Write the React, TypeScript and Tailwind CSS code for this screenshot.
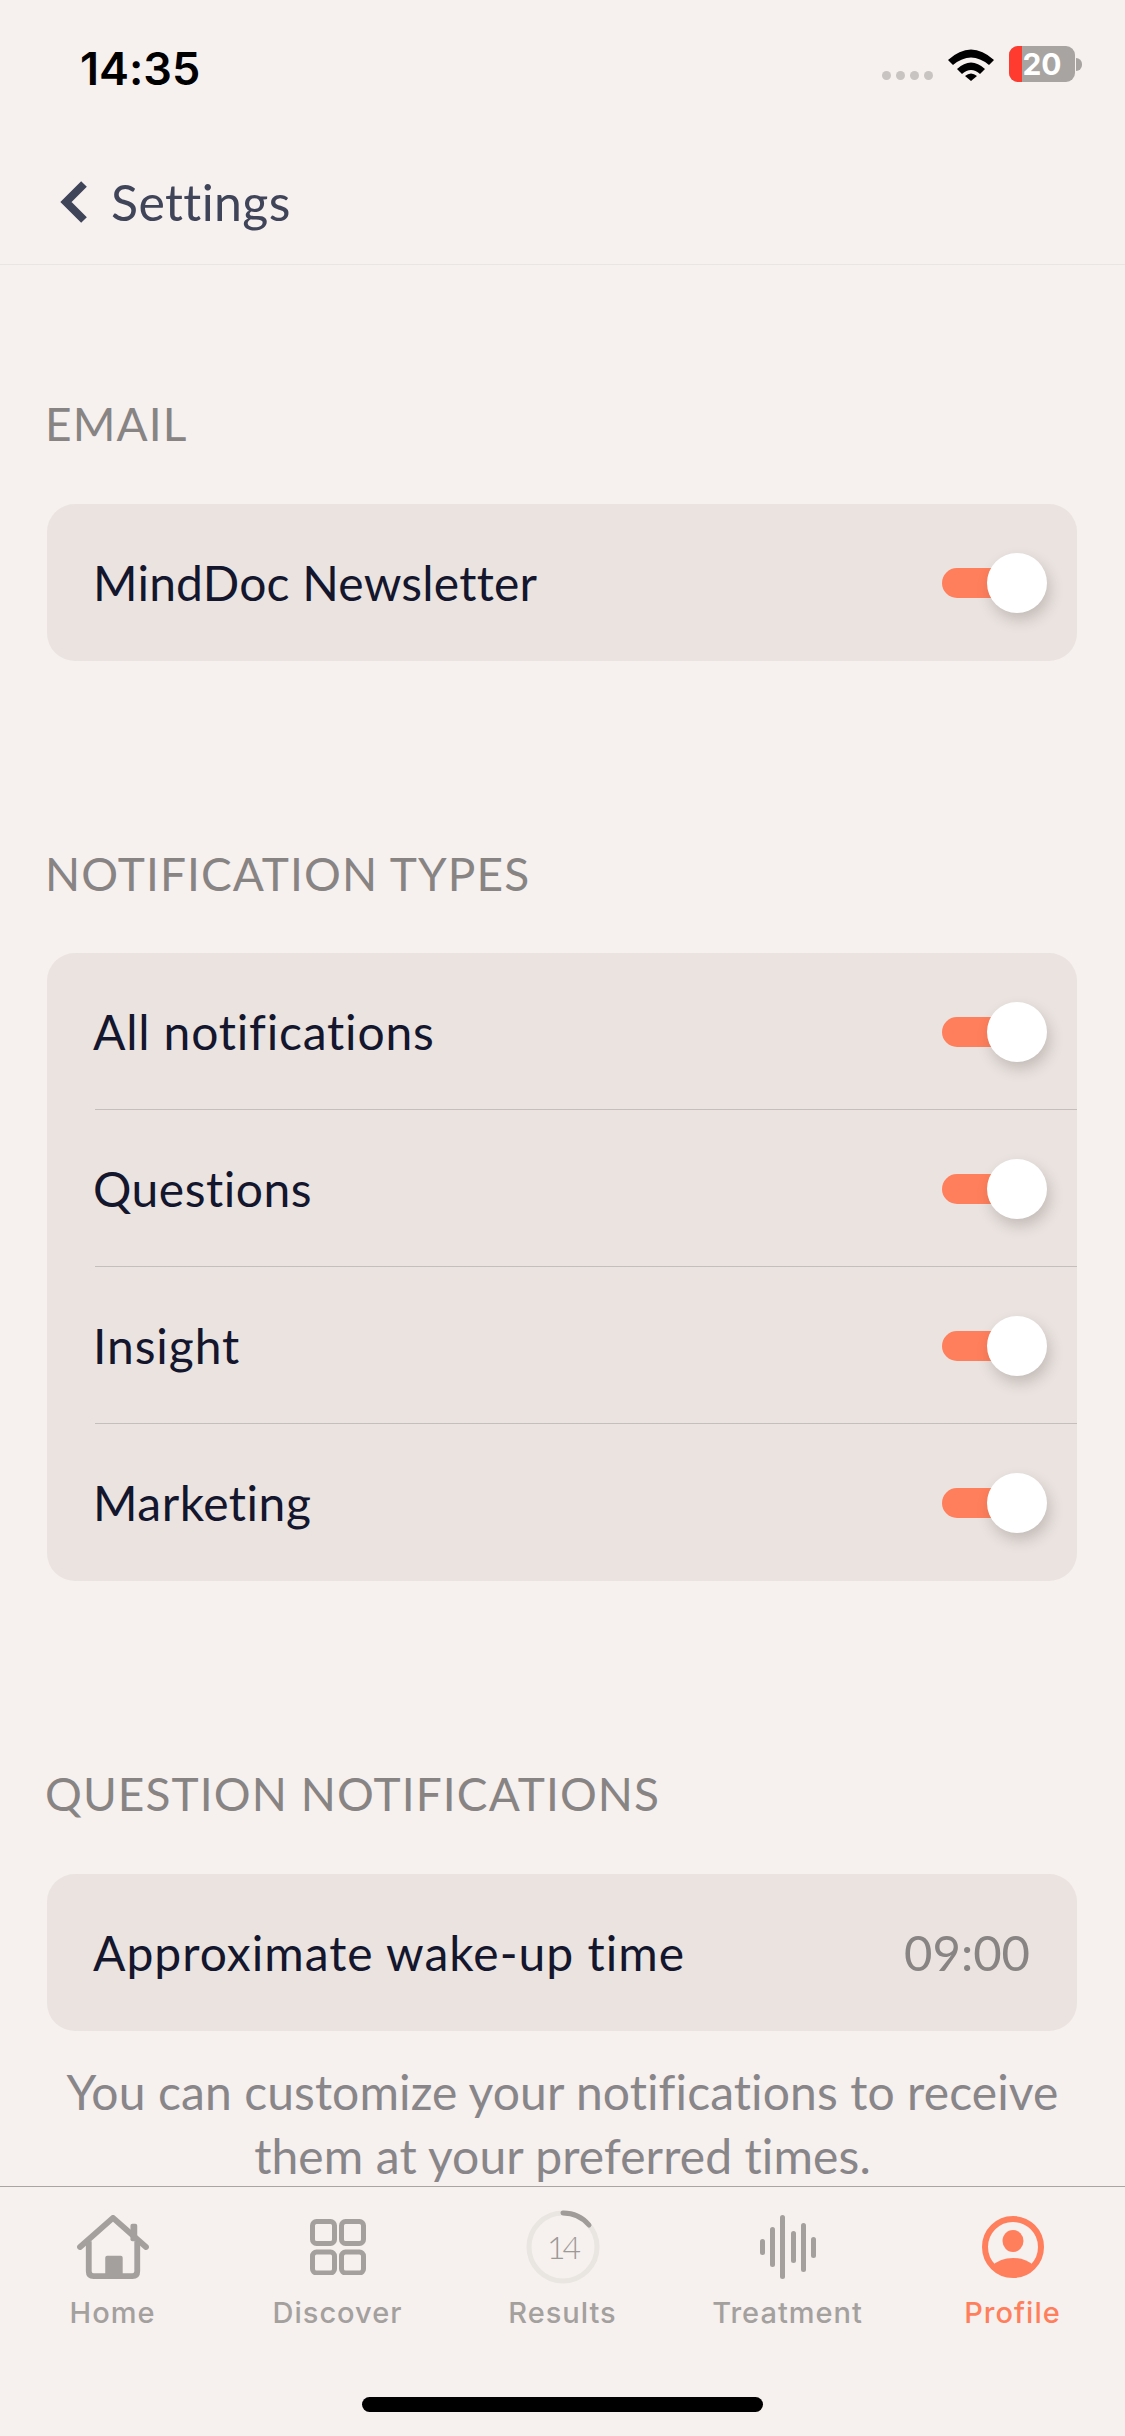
import React from 'react';

const BODY_FONT = { fontFamily: 'Lato, "Noto Sans", sans-serif', fontVariantLigatures: 'none' };

const Toggle = () => (
  <div className="flex items-center">
    <div className="h-[30px] w-[80px] rounded-full bg-[#ff7f5c]" />
    <div className="-ml-[35px] h-[60px] w-[60px] rounded-full bg-white shadow-[3px_7px_14px_rgba(60,50,45,0.22)]" />
  </div>
);

const Row = ({
  label,
  divider,
  labelClass = 'tracking-[0.5px]',
  children,
}: {
  label: string;
  divider?: boolean;
  labelClass?: string;
  children: React.ReactNode;
}) => (
  <div className="pl-[48px]">
    <div className={`flex h-[157px] items-center justify-between pr-[30px] ${divider ? 'shadow-[inset_0_-1px_0_#c4bebd]' : ''}`}>
      <span className={`-ml-[2px] text-[48px] leading-none text-[#14162e] ${labelClass}`}>{label}</span>
      {children}
    </div>
  </div>
);

const SectionLabel = ({ children, className }: { children: string; className: string }) => (
  <div className={`px-[45px] text-[46px] leading-[56px] tracking-[1.1px] text-[#878483] ${className}`}>{children}</div>
);

const HomeIcon = () => (
  <svg width="74" height="64" viewBox="0 0 74 66" fill="none">
    <path d="M3 33 L37 3 L71 33" stroke="#a3a09e" strokeWidth="6" strokeLinecap="round" strokeLinejoin="round" />
    <path d="M12 27 V58 Q12 63 17 63 H57 Q62 63 62 58 V27" stroke="#a3a09e" strokeWidth="6" />
    <rect x="55" y="9" width="7" height="18" rx="2" fill="#a3a09e" />
    <path d="M29 44 Q29 42 31 42 H45 Q47 42 47 44 V62 H29 Z" fill="#a3a09e" />
  </svg>
);

const DiscoverIcon = () => (
  <svg width="56" height="56" viewBox="0 0 56 56" fill="none" stroke="#a3a09e" strokeWidth="5">
    <rect x="2.5" y="2.5" width="22" height="22" rx="4" />
    <rect x="31.5" y="2.5" width="22" height="22" rx="4" />
    <rect x="2.5" y="33" width="22" height="21" rx="4" />
    <rect x="31.5" y="33" width="22" height="21" rx="4" />
  </svg>
);

const ResultsIcon = () => (
  <div className="relative h-[74px] w-[74px]">
    <svg width="74" height="74" viewBox="0 0 74 74" fill="none">
      <circle cx="37" cy="37" r="34" stroke="#e9e5e1" strokeWidth="5" />
      <path d="M37 3 A34 34 0 0 1 63 15" stroke="#a09c9a" strokeWidth="5" strokeLinecap="round" />
    </svg>
    <span
      className="absolute inset-0 flex items-center justify-center text-[32px] font-light tracking-[-3px] text-[#9c9997]"
      style={BODY_FONT}
    >
      14
    </span>
  </div>
);

const TreatmentIcon = () => (
  <svg width="56" height="64" viewBox="0 0 56 64" fill="#a3a09e">
    <rect x="0" y="24" width="5" height="16" rx="2.5" />
    <rect x="10" y="12" width="5" height="40" rx="2.5" />
    <rect x="20" y="0" width="5" height="64" rx="2.5" />
    <rect x="31" y="16" width="5" height="32" rx="2.5" />
    <rect x="41" y="8" width="5" height="49" rx="2.5" />
    <rect x="51" y="22" width="5" height="21" rx="2.5" />
  </svg>
);

const ProfileIcon = () => (
  <svg width="62" height="62" viewBox="0 0 62 62" fill="none">
    <circle cx="31" cy="31" r="28" stroke="#ff7f5c" strokeWidth="6" />
    <ellipse cx="31" cy="25" rx="10.5" ry="11" fill="#ff7f5c" />
    <path d="M10 50 Q18 42 31 42 Q44 42 52 50 Q43 60 31 60 Q19 60 10 50 Z" fill="#ff7f5c" />
  </svg>
);

const tabs = [
  { label: 'Home', icon: <HomeIcon /> },
  { label: 'Discover', icon: <DiscoverIcon /> },
  { label: 'Results', icon: <ResultsIcon /> },
  { label: 'Treatment', icon: <TreatmentIcon /> },
  { label: 'Profile', icon: <ProfileIcon />, active: true },
];

export default function App() {
  return (
    <div className="flex h-[2436px] w-[1125px] flex-col overflow-hidden bg-[#f6f0ee]" style={BODY_FONT}>
      <header className="h-[265px] shrink-0 border-b border-[#e9e5e2]">
        {/* status bar */}
        <div className="flex h-[174px] items-start justify-between pl-[80px] pr-[43px] pt-[46px]">
          <span
            className="text-[45px] font-semibold leading-[46px] text-black"
            style={{ fontFamily: 'Inter, sans-serif' }}
          >
            14:35
          </span>
          <div className="flex items-start">
            <div className="mt-[25px] flex gap-[5px]">
              {[0, 1, 2, 3].map(i => (
                <div key={i} className="h-[9px] w-[9px] rounded-full bg-[#c8c4c1]" />
              ))}
            </div>
            <svg className="ml-[15px] mt-[1px]" width="46" height="34" viewBox="0 0 46 34" fill="#000">
              <path d="M0 13 Q23 -8 46 13 L41 18 Q23 3 5 18 Z" />
              <path d="M9 22 Q23 9 37 22 L32 27 Q23 19 14 27 Z" />
              <path d="M17 29 Q23 24 29 29 L23 34 Z" />
            </svg>
            <div className="relative ml-[15px] flex h-[36px] w-[66px] items-center justify-center overflow-hidden rounded-[9px] bg-[#a8a4a2]">
              <div className="absolute inset-y-0 left-0 w-[13px] bg-[#ff3b30]" />
              <span
                className="relative text-[30px] font-bold leading-none text-white"
                style={{ fontFamily: 'Inter, sans-serif' }}
              >
                20
              </span>
            </div>
            <div className="ml-[1px] mt-[12px] h-[13px] w-[6px] rounded-r-full bg-[#a8a4a2]" />
          </div>
        </div>
        {/* nav row */}
        <div className="flex items-center pl-[58px]">
          <svg width="30" height="44" viewBox="0 0 30 44" fill="none">
            <path d="M26 4 L8 22 L26 40" stroke="#3f4459" strokeWidth="8" />
          </svg>
          <span className="ml-[23px] text-[50px] leading-[56px] tracking-[0.4px] text-[#3f4459]">Settings</span>
        </div>
      </header>

      <main className="min-h-0 flex-1 overflow-hidden">
        <SectionLabel className="mt-[131px]">EMAIL</SectionLabel>
        <section className="ml-[47px] mr-[48px] mt-[52px] overflow-hidden rounded-[28px] bg-[#eae3df]">
          <Row label="MindDoc Newsletter" labelClass="tracking-[0.2px]"><Toggle /></Row>
        </section>

        <SectionLabel className="mt-[185px]">NOTIFICATION TYPES</SectionLabel>
        <section className="ml-[47px] mr-[48px] mt-[51px] overflow-hidden rounded-[28px] bg-[#eae3df]">
          <Row label="All notifications" labelClass="tracking-[0.8px]" divider><Toggle /></Row>
          <Row label="Questions" divider><Toggle /></Row>
          <Row label="Insight" labelClass="tracking-[0.9px]" divider><Toggle /></Row>
          <Row label="Marketing"><Toggle /></Row>
        </section>

        <SectionLabel className="mt-[185px]">QUESTION NOTIFICATIONS</SectionLabel>
        <section className="ml-[47px] mr-[48px] mt-[52px] overflow-hidden rounded-[28px] bg-[#eae3df]">
          <Row label="Approximate wake-up time" labelClass="tracking-[1px]">
            <span className="pr-[17px] text-[49px] leading-none text-[#878483]">09:00</span>
          </Row>
        </section>

        <p className="mt-[29px] px-[47px] text-center text-[48px] leading-[64px] tracking-[0.1px] text-[#888689]">
          You can customize your notifications to receive them at your preferred times.
        </p>
      </main>

      <nav className="h-[250px] shrink-0 border-t border-[#a9a5a3]">
        <div className="grid h-[136px] grid-cols-5">
          {tabs.map(tab => (
            <div key={tab.label} className="flex flex-col items-center">
              <div className="flex h-[98px] items-center justify-center pt-[22px]">{tab.icon}</div>
              <span
                className={`mt-[10px] text-[29px] font-medium leading-[36px] tracking-[1px] ${tab.active ? 'text-[#ff7f5c]' : 'text-[#a3a09e]'}`}
                style={{ fontFamily: 'Inter, sans-serif' }}
              >
                {tab.label}
              </span>
            </div>
          ))}
        </div>
        <div className="mx-auto mt-[74px] h-[15px] w-[401px] rounded-full bg-black" />
      </nav>
    </div>
  );
}
